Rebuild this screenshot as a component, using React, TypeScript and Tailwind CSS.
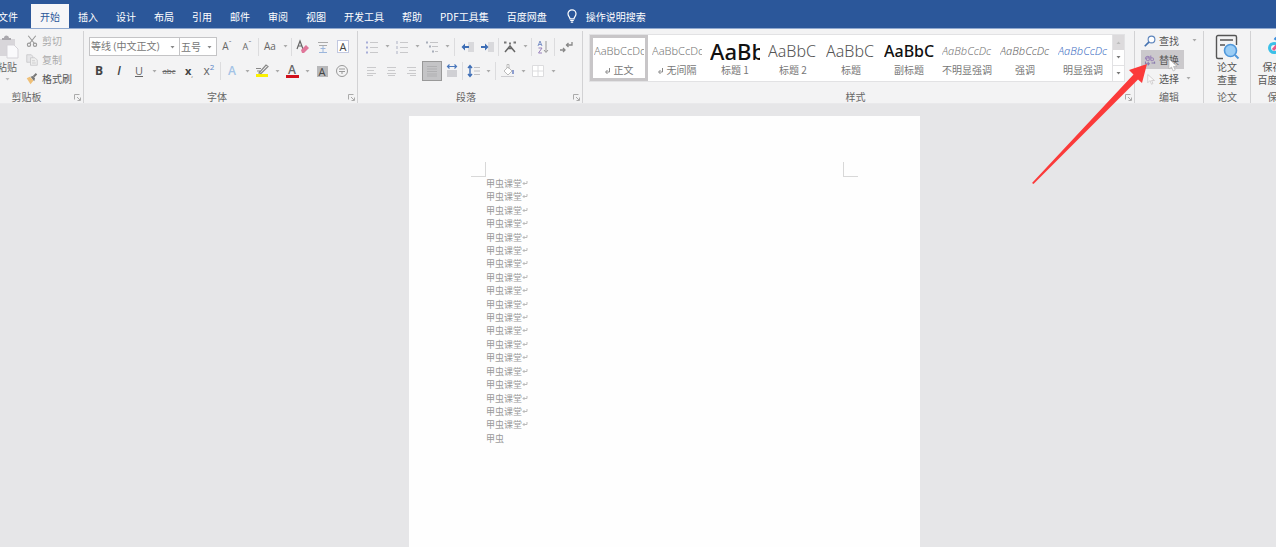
import type { ReactNode } from 'react'
import clsx from 'clsx'

const tabs = ['插入', '设计', '布局', '引用', '邮件', '审阅', '视图', '开发工具', '帮助', 'PDF工具集', '百度网盘']

const styles = [
  { name: '正文', sample: 'AaBbCcDc', look: 'text-[11px] font-light text-[#777]', mark: true, active: true },
  { name: '无间隔', sample: 'AaBbCcDc', look: 'text-[11px] font-light text-[#777]', mark: true },
  { name: '标题 1', sample: 'AaBb', look: 'text-[22px] font-medium text-[#111]' },
  { name: '标题 2', sample: 'AaBbC', look: 'text-[16px] font-light text-[#555]' },
  { name: '标题', sample: 'AaBbC', look: 'text-[16px] font-light text-[#555]' },
  { name: '副标题', sample: 'AaBbC', look: 'text-[16px] font-medium text-[#111]' },
  { name: '不明显强调', sample: 'AaBbCcDc', look: 'text-[11px] font-light italic text-[#777]' },
  { name: '强调', sample: 'AaBbCcDc', look: 'text-[11px] font-light italic text-[#666]' },
  { name: '明显强调', sample: 'AaBbCcDc', look: 'text-[11px] font-light italic text-[#4472c4]' },
]

const lines = [...Array(19).fill('甲虫课堂'), '甲虫']

function Caret({ className = 'text-[#aaa]' }: { className?: string }) {
  return (
    <svg viewBox="0 0 5 3" className={clsx('h-[3px] w-[5px]', className)}>
      <path d="M.5 0h4L2.5 2.500z" fill="currentColor" />
    </svg>
  )
}

function Tool({ label, active, children }: { label: string; active?: boolean; children: ReactNode }) {
  return (
    <button
      type="button"
      aria-label={label}
      className={clsx('flex h-5 w-5 shrink-0 items-center justify-center', active && 'border border-[#999] bg-[#c4c4c6]')}
    >
      {children}
    </button>
  )
}

function More({ label }: { label: string }) {
  return (
    <button type="button" aria-label={label} className="flex h-5 w-[10px] shrink-0 items-center justify-center">
      <Caret />
    </button>
  )
}

function Sep({ className = 'mx-px' }: { className?: string }) {
  return <span className={clsx('h-[18px] w-px shrink-0 bg-[#dcdcde]', className)} />
}

function Icon({ children, className = 'h-4 w-4' }: { children: ReactNode; className?: string }) {
  return (
    <svg viewBox="0 0 16 16" fill="none" className={className}>
      {children}
    </svg>
  )
}

function Group({ title, launcher, className, children }: { title: string; launcher?: boolean; className?: string; children: ReactNode }) {
  return (
    <section className={clsx('flex h-[72px] flex-col border-r border-[#d2d2d4]', className)}>
      <div className="flex-1">{children}</div>
      <div className="flex h-3 items-center">
        <h2 className="flex-1 text-center leading-3 text-[#666]">{title}</h2>
        {launcher && (
          <button type="button" aria-label={`${title}设置`} className="flex w-3 justify-center">
            <svg viewBox="0 0 7 7" fill="none" stroke="#aaa" className="h-[7px] w-[7px]">
              <path d="M.5 5.500V.5h5M3 3l3 3M6.500 3.500v3h-3" />
            </svg>
          </button>
        )}
      </div>
    </section>
  )
}

function TabBar() {
  return (
    <nav className="flex h-7 items-end overflow-hidden bg-[#2b579a] text-white">
      <button type="button" className="-ml-[11px] mr-1 h-6 shrink-0 px-[9px]">文件</button>
      <button type="button" className="h-6 shrink-0 bg-[#f6f6f8] px-[9px] text-[#2b579a]">开始</button>
      {tabs.map(t => (
        <button key={t} type="button" className="h-6 shrink-0 px-[9px] whitespace-nowrap">{t}</button>
      ))}
      <button type="button" className="flex h-6 shrink-0 items-center gap-2 px-[10px] whitespace-nowrap">
        <svg viewBox="0 0 12 14" fill="none" stroke="#fff" strokeWidth="1.2" className="h-[14px] w-3">
          <path d="M4 9.800C4 8.200 2 7.300 2 4.800a4 4 0 0 1 8 0C10 7.300 8 8.200 8 9.800zM4.200 11.500h3.600M4.800 13.200h2.400" />
        </svg>
        操作说明搜索
      </button>
    </nav>
  )
}

function Clipboard() {
  return (
    <Group title="剪贴板" launcher className="-ml-[18px] w-[102px] shrink-0">
      <div className="flex pl-[6px]">
        <button type="button" className="flex w-[38px] flex-col items-center pt-1 text-[#666]">
          <svg viewBox="0 0 24 24" className="h-6 w-6">
            <path d="M2 4h18v17H2z" fill="#d8d6da" />
            <path d="M7 5V3h2a2.500 2.500 0 0 1 5 0h2v2z" fill="#aaa8ad" />
            <path d="M12 10h7l4 4v9H12z" fill="#fafafc" stroke="#d5d3d8" />
          </svg>
          <span className="leading-4">粘贴</span>
          <span className="flex h-2 items-center"><Caret className="text-[#bbb]" /></span>
        </button>
        <div className="text-[#aaa]">
          <button type="button" className="flex h-[19px] items-center gap-1">
            <Icon className="h-3 w-3">
              <path d="M3 1l8 10M13 1L5 11" stroke="#999" strokeWidth="1.500" />
              <circle cx="4" cy="13" r="2.200" stroke="#999" strokeWidth="1.500" />
              <circle cx="12" cy="13" r="2.200" stroke="#999" strokeWidth="1.500" />
            </Icon>
            剪切
          </button>
          <button type="button" className="flex h-[19px] items-center gap-1">
            <Icon className="h-3 w-3">
              <path d="M1 1h6l2 2v8H1z" fill="#e6e6e8" stroke="#c4c4c6" />
              <path d="M6 5h6l3 3v7H6z" fill="#eee" stroke="#c4c4c6" />
              <path d="M8 9h4M8 12h5" stroke="#c4c4c6" />
            </Icon>
            复制
          </button>
          <button type="button" className="flex h-[19px] items-center gap-1 text-[#555]">
            <Icon className="h-3 w-3">
              <path d="M1 7l4-2 5 5-4 5z" fill="#efc078" />
              <path d="M6 5l3-1 3 3-1 4z" fill="#777" />
              <path d="M10 5l4-4" stroke="#777" strokeWidth="2.500" />
            </Icon>
            格式刷
          </button>
        </div>
      </div>
    </Group>
  )
}

function Combo({ label, value, className }: { label: string; value: string; className: string }) {
  return (
    <div className={clsx('relative h-[19px] shrink-0 border border-[#c4c4c6] bg-white', className)}>
      <select aria-label={label} className="h-full w-full appearance-none bg-transparent pl-px text-[#777]">
        <option>{value}</option>
      </select>
      <Caret className="pointer-events-none absolute top-2 right-1 text-[#888]" />
    </div>
  )
}

function FontGroup() {
  return (
    <Group title="字体" launcher className="w-[274px] shrink-0 pl-[5px]">
      <div className="flex h-[31px] items-center font-['Open_Sans',sans-serif] text-[#666]">
        <Combo label="字体" value="等线 (中文正文)" className="w-[91px] font-['Open_Sans','Noto_Sans_CJK_SC',sans-serif]" />
        <Combo label="字号" value="五号" className="-ml-px w-[38px] font-['Noto_Sans_CJK_SC',sans-serif]" />
        <Tool label="增大字号"><span className="text-[10px]">A</span><span className="-mt-2 text-[8px] text-[#777]">ˆ</span></Tool>
        <Tool label="减小字号"><span className="text-[9px]">A</span><span className="-mt-2 text-[8px] text-[#777]">ˇ</span></Tool>
        <Sep />
        <Tool label="更改大小写">Aa</Tool>
        <More label="大小写选项" />
        <Sep />
        <Tool label="清除格式">
          <Icon>
            <path d="M2 10l3-8 3 8M3 7h4" stroke="#666" strokeWidth="1.200" />
            <path d="M6 11l5-5 3 3-5 5H7z" fill="#e0779a" />
          </Icon>
        </Tool>
        <Tool label="拼音指南">
          <Icon>
            <path d="M3 3.500h10M4 6.500h8" stroke="#aaa" />
            <path d="M8 7v6M5.500 9.500h5M4 13.500h8" stroke="#9cb6dc" />
          </Icon>
        </Tool>
        <Tool label="字符边框">
          <span className="flex h-[13px] w-3 items-center justify-center border border-[#c2c8e0] bg-white text-[11px] leading-3 text-[#444]">A</span>
        </Tool>
      </div>
      <div className="flex h-[18px] items-center font-['Open_Sans',sans-serif] text-[#666]">
        <Tool label="加粗"><b className="text-[12px] text-[#444]">B</b></Tool>
        <Tool label="倾斜"><i className="text-[12px] font-semibold text-[#444]">I</i></Tool>
        <Tool label="下划线"><span className="text-[11px] underline">U</span></Tool>
        <More label="下划线选项" />
        <Tool label="删除线"><s className="text-[8px]">abc</s></Tool>
        <Tool label="下标"><b className="text-[11px] text-[#444]">x</b><span className="mt-2 text-[7px]">,</span></Tool>
        <Tool label="上标"><span className="text-[12px]">x</span><span className="-mt-2 text-[8px] text-[#5b84c4]">2</span></Tool>
        <Sep />
        <Tool label="文本效果"><span className="text-[12px] font-semibold text-[#a3c3e6]">A</span></Tool>
        <More label="文本效果选项" />
        <Tool label="突出显示">
          <Icon>
            <path d="M2 11h12v3H2z" fill="#fbf000" />
            <path d="M5 10l7-8 2 1.500-7 7zM2 5.500h5M3 8h3" stroke="#888" strokeWidth="1.200" />
          </Icon>
        </Tool>
        <More label="突出显示颜色" />
        <Tool label="字体颜色">
          <span className="flex w-[13px] flex-col items-center border-b-[3px] border-[#d2101c] text-[12px] leading-[10px] font-semibold">A</span>
        </Tool>
        <More label="字体颜色选项" />
        <Tool label="字符底纹"><span className="w-[11px] bg-[#b8b8ba] text-center text-[11px] leading-[11px] text-[#444]">A</span></Tool>
        <Tool label="带圈字符">
          <Icon>
            <circle cx="8" cy="8" r="5.500" stroke="#999" />
            <path d="M5 6h6M5 8.500h6M8 8.500V11" stroke="#999" />
          </Icon>
        </Tool>
      </div>
    </Group>
  )
}

function ListIcon({ first, stroke }: { first: string; stroke: string }) {
  return (
    <Icon>
      <path d="M6 3.500h8M6 8.500h8M6 13.500h8" stroke="#c8c8ca" />
      <path d={first} stroke={stroke} strokeWidth="2" />
    </Icon>
  )
}

function ParagraphGroup() {
  return (
    <Group title="段落" launcher className="w-[225px] shrink-0 pl-1">
      <div className="flex h-[31px] items-center">
        <Tool label="项目符号"><ListIcon first="M2 3.500h2M2 8.500h2M2 13.500h2" stroke="#a8aed8" /></Tool>
        <More label="项目符号库" />
        <Tool label="编号"><ListIcon first="M3 2v3M3 7v3M3 12v3" stroke="#d0d2dc" /></Tool>
        <More label="编号库" />
        <Tool label="多级列表">
          <Icon>
            <path d="M2 3.500h2M5 7.500h2M8 12.500h2" stroke="#a8aeba" strokeWidth="2" />
            <path d="M6 3.500h8M8 7.500h6M11 12.500h3" stroke="#c4c4c6" />
          </Icon>
        </Tool>
        <More label="列表库" />
        <Sep className="mx-0.5" />
        <Tool label="减少缩进量">
          <Icon>
            <path d="M9 3h6v10H9z" fill="#d9d9dc" />
            <path d="M2.500 8L6 4.500V7h4v2H6v2.500z" fill="#3d6db5" />
          </Icon>
        </Tool>
        <Tool label="增加缩进量">
          <Icon>
            <path d="M9 3h6v10H9z" fill="#d9d9dc" />
            <path d="M9.500 8L6 4.500V7H2v2h4v2.500z" fill="#3d6db5" />
          </Icon>
        </Tool>
        <Sep />
        <Tool label="中文版式">
          <Icon>
            <path d="M3 13l5-6 5 6M5.500 9.500h5" stroke="#666" strokeWidth="1.500" />
            <path d="M2 3.500h2.500M11.500 3.500H14M7 4.500h2" stroke="#777" strokeWidth="1.800" />
          </Icon>
        </Tool>
        <More label="中文版式选项" />
        <Sep />
        <Tool label="排序">
          <Icon>
            <path d="M3 7l2-5 2 5M3.500 5.500h3" stroke="#7d93c8" />
            <path d="M3.500 9h3.500l-3.500 5H7" stroke="#9a82bc" />
            <path d="M11 2v11M9 11l2 2.500 2-2.500" stroke="#999" />
          </Icon>
        </Tool>
        <Sep />
        <Tool label="显示编辑标记">
          <Icon>
            <path d="M14 3v3H8M10.500 4L8.500 6l2 2" stroke="#888" strokeWidth="1.300" />
            <path d="M2 11h5M5 9l2 2-2 2" stroke="#888" strokeWidth="1.300" />
          </Icon>
        </Tool>
      </div>
      <div className="flex h-[18px] items-center">
        <Tool label="左对齐"><Icon><path d="M3 4.500h9M3 7.500h7M3 10.500h9M3 12.500h6" stroke="#cacacc" /></Icon></Tool>
        <Tool label="居中"><Icon><path d="M3 4.500h9M4 7.500h7M3 10.500h9M4 12.500h7" stroke="#cacacc" /></Icon></Tool>
        <Tool label="右对齐"><Icon><path d="M3 4.500h9M5 7.500h7M3 10.500h9M6 12.500h6" stroke="#cacacc" /></Icon></Tool>
        <Tool label="两端对齐" active><Icon><path d="M3 3.500h10M3 6h10M3 8.500h10M3 11h10M3 13h10" stroke="#b0b0b2" /></Icon></Tool>
        <Tool label="分散对齐">
          <Icon>
            <path d="M3 7h10v7H3z" fill="#d0d0d4" />
            <path d="M3 3.500h10M5.500 1.500l-2 2 2 2M10.500 1.500l2 2-2 2" stroke="#4b78bc" strokeWidth="1.200" />
          </Icon>
        </Tool>
        <Sep className="mx-0" />
        <Tool label="行距">
          <Icon>
            <path d="M9 4.500h6M9 8h6M9 11.500h6" stroke="#c0c0c4" />
            <path d="M5 2.500v11M3 5l2-2.500L7 5M3 11l2 2.500L7 11" stroke="#3d6db5" strokeWidth="1.400" />
          </Icon>
        </Tool>
        <More label="行距选项" />
        <Sep className="mx-0.5" />
        <Tool label="底纹">
          <Icon>
            <path d="M4 8l4-4 4 4-4 4zM7 5V1.500h2V6" fill="#fff" stroke="#bbb" />
            <path d="M13 7v4" stroke="#8d9ed0" strokeWidth="2" />
            <path d="M1 13.500h13" stroke="#ccccd0" />
          </Icon>
        </Tool>
        <More label="底纹颜色" />
        <Tool label="边框">
          <Icon>
            <path d="M3 3h10v10H3z" fill="#fff" />
            <path d="M2.500 2.500h11v11h-11zM8 2.500v11M2.500 8h11" stroke="#dcdcde" />
          </Icon>
        </Tool>
        <More label="边框选项" />
      </div>
    </Group>
  )
}

function StylesGroup() {
  return (
    <Group title="样式" launcher className="min-w-0 flex-1 pl-[6px]">
      <div className="flex pt-[3px]">
        <div className="flex h-[48px] border border-[#e2e2e4] bg-white">
          {styles.map(s => (
            <button
              key={s.name}
              type="button"
              className={clsx(
                'flex w-[58px] flex-col items-center border-[3px]',
                s.active ? 'border-[#c8c6c8]' : 'border-transparent'
              )}
            >
              <span className={clsx("flex h-[26px] w-[50px] items-center overflow-hidden font-['Noto_Sans',sans-serif] whitespace-nowrap", s.look)}>
                {s.sample}
              </span>
              <span className="flex items-center gap-1 leading-3 whitespace-nowrap text-[#777]">
                {s.mark && (
                  <svg viewBox="0 0 5 6" fill="none" stroke="#888" className="mt-0.5 h-[6px] w-[5px]">
                    <path d="M4.500 0v4H1M2.500 2L.5 4l2 2" />
                  </svg>
                )}
                {s.name}
              </span>
            </button>
          ))}
          <div className="flex w-3 flex-col border-l border-[#e2e2e4]">
            <button type="button" aria-label="上一行" className="flex flex-1 items-center justify-center bg-[#dcdadc]"><Caret className="rotate-180 text-[#bbb]" /></button>
            <button type="button" aria-label="下一行" className="flex flex-1 items-center justify-center border-b border-[#e2e2e4]"><Caret className="text-[#777]" /></button>
            <button type="button" aria-label="其他样式" className="flex flex-1 items-center justify-center"><Caret className="text-[#777]" /></button>
          </div>
        </div>
      </div>
    </Group>
  )
}

function EditGroup() {
  return (
    <Group title="编辑" className="w-[69px] shrink-0 text-[#555]">
      <div className="flex flex-col items-start pl-[6px]">
        <button type="button" className="flex h-[19px] w-14 items-center pl-[3px]">
          <Icon className="mr-[3px] h-3 w-3">
            <circle cx="10" cy="6" r="4.500" fill="#fff" stroke="#5b84bc" strokeWidth="1.500" />
            <path d="M6.500 9.500L1 15" stroke="#4472b0" strokeWidth="2.200" />
          </Icon>
          查找
          <span className="ml-auto"><Caret /></span>
        </button>
        <button type="button" className="relative flex h-[19px] w-[43px] items-center bg-[#cbc9cc] pl-[3px]">
          <Icon className="mr-[3px] h-3 w-3">
            <path d="M2 7a3 3 0 0 1 5-3v4M7 6a2 2 0 1 0 0 2M9 2v6M9 6a2 2 0 1 1 0 2" stroke="#9a84b8" strokeWidth="1.500" />
            <path d="M2 10v3h5M5 11l2 2-2 2M10 12h5M14 10v3" stroke="#8a7cae" strokeWidth="1.500" />
          </Icon>
          替换
          <svg viewBox="0 0 10 14" className="absolute top-2 left-[27px] h-[14px] w-[10px]">
            <path d="M1 1v10l2.500-2 1.700 4 2-1-1.700-3.500H9z" fill="#fff" stroke="#aaa" strokeWidth=".6" />
          </svg>
        </button>
        <button type="button" className="flex h-[19px] w-[50px] items-center pl-[3px]">
          <Icon className="mr-[3px] h-3 w-3">
            <path d="M5 2v11l3-3 2 5 2-1-2-4h4z" fill="#fafafa" stroke="#c8c4c6" />
          </Icon>
          选择
          <span className="ml-auto"><Caret /></span>
        </button>
      </div>
    </Group>
  )
}

function Ribbon() {
  return (
    <div className="flex h-[76px] overflow-hidden border-t border-[#8fa8cf] border-b border-b-[#e9e9eb] bg-[#f3f3f4] pt-[2px]">
      <Clipboard />
      <FontGroup />
      <ParagraphGroup />
      <StylesGroup />
      <EditGroup />
      <Group title="论文" className="w-[47px] shrink-0">
        <button type="button" className="flex w-full flex-col items-center pt-[3px] text-[#555]">
          <svg viewBox="0 0 26 26" fill="none" className="h-[26px] w-[26px]">
            <path d="M9 24.500H4a1.500 1.500 0 0 1-1.500-1.500V3A1.500 1.500 0 0 1 4 1.500h17A1.500 1.500 0 0 1 22.500 3v8" stroke="#555" strokeWidth="1.400" />
            <path d="M6 6h13M6 11h5" stroke="#555" strokeWidth="1.600" />
            <circle cx="16.500" cy="16.500" r="6" fill="#9bcdf5" stroke="#4f97da" strokeWidth="1.600" />
            <path d="M21 21l3.500 3.500" stroke="#4f97da" strokeWidth="2" />
          </svg>
          <span className="leading-[13px]">论文<br />查重</span>
        </button>
      </Group>
      <Group title="保存" className="-mr-[29px] w-[54px] shrink-0">
        <button type="button" className="flex w-full flex-col items-center pt-[3px] text-[#555]">
          <svg viewBox="0 0 26 26" fill="none" strokeWidth="3" className="h-[26px] w-[26px]">
            <circle cx="9" cy="14" r="4.500" stroke="#3bc0e8" />
            <circle cx="19" cy="14" r="4.500" stroke="#e85a6a" />
            <path d="M10 6a4.500 4.500 0 0 1 8 0" stroke="#3b8ede" />
            <path d="M8 16l7-8" stroke="#e85a8a" />
          </svg>
          <span className="leading-[13px] whitespace-nowrap">保存到<br />百度网盘</span>
        </button>
      </Group>
    </div>
  )
}

export default function App() {
  return (
    <div className="relative flex h-screen flex-col overflow-hidden bg-[#e6e6e8] font-['Noto_Sans_CJK_SC',sans-serif] text-[10px]">
      <TabBar />
      <Ribbon />
      <main className="flex flex-1 justify-center overflow-hidden pt-3 pl-[53px]">
        <article className="w-[511px] bg-[#fefefe] px-[62px] pt-[46px]">
          <div className="flex justify-between">
            <span className="h-[15px] w-[15px] border-r border-b border-[#d8d8d8]" />
            <span className="h-[15px] w-[15px] border-b border-l border-[#d8d8d8]" />
          </div>
          <div className="flex h-[268px] flex-col justify-between pl-[15px] text-[9px] leading-[13px] text-[#999]">
            {lines.map((line, i) => (
              <p key={i} className="flex items-center">
                {line}
                {i < lines.length - 1 && (
                  <svg viewBox="0 0 6 5" fill="none" stroke="#bbb" className="h-[5px] w-[6px]">
                    <path d="M5 0v2.500H1M2.500 1L1 2.500 2.500 4" />
                  </svg>
                )}
              </p>
            ))}
          </div>
        </article>
      </main>
      <svg viewBox="0 0 120 124" className="pointer-events-none absolute top-[62px] right-[126px] h-[124px] w-[120px]">
        <path d="M117 2L99 8l4.500 4.500L2 121l1.500 1L108 17.500l4 3.500z" fill="#fb3a3a" />
      </svg>
    </div>
  )
}
